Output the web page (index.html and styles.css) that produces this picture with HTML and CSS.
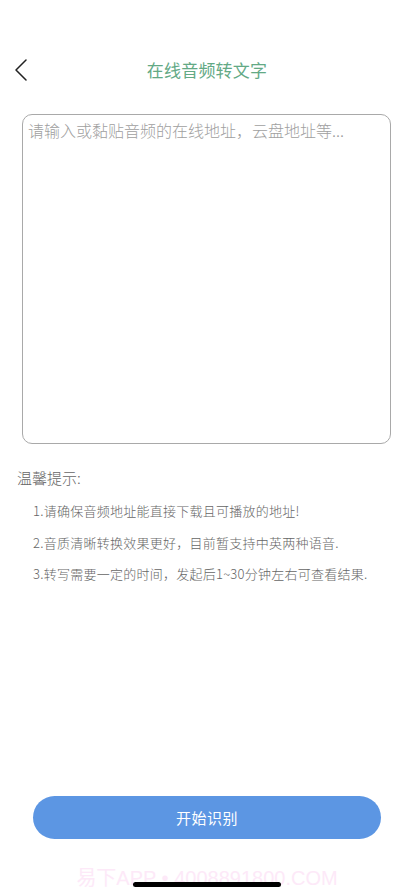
FILE: index.html
```html
<!DOCTYPE html>
<html lang="zh">
<head>
<meta charset="utf-8">
<meta name="viewport" content="width=device-width, initial-scale=1">
<title>在线音频转文字</title>
<link rel="stylesheet" href="styles.css">
</head>
<body>
<div class="page">
  <header class="navbar">
    <button class="back" aria-label="返回">
      <svg width="14" height="22" viewBox="0 0 14 22"><path d="M12 1 L2 11 L12 21" fill="none" stroke="#222" stroke-width="1.5" stroke-linecap="round" stroke-linejoin="round"/></svg>
    </button>
    <h1 class="title">在线音频转文字</h1>
  </header>
  <div class="input-wrap">
    <textarea class="url-input" placeholder="请输入或黏贴音频的在线地址，云盘地址等..."></textarea>
  </div>
  <section class="tips">
    <div class="tips-title">温馨提示:</div>
    <ol class="tips-list">
      <li>1.请确保音频地址能直接下载且可播放的地址!</li>
      <li>2.音质清晰转换效果更好，目前暂支持中英两种语音.</li>
      <li>3.转写需要一定的时间，发起后1~30分钟左右可查看结果.</li>
    </ol>
  </section>
  <div class="spacer"></div>
  <div class="footer">
    <button class="start">开始识别</button>
    <div class="watermark">易下APP • 4008891800.COM</div>
    <div class="home-bar"></div>
  </div>
</div>
</body>
</html>
```
FILE: styles.css
```css
* { box-sizing: border-box; }
html, body { margin: 0; padding: 0; background: #fff; }
body {
  font-family: "Noto Sans CJK SC", "Noto Sans", sans-serif;
  color: #333;
}
.page {
  width: 414px;
  height: 896px;
  display: flex;
  flex-direction: column;
  overflow: hidden;
}
.navbar {
  position: relative;
  height: 44px;
  margin-top: 48px;
  display: flex;
  align-items: center;
  justify-content: center;
}
.back {
  position: absolute;
  left: 14px;
  top: 11px;
  border: 0;
  background: none;
  padding: 0;
  width: 20px;
  height: 22px;
  display: flex;
  align-items: center;
}
.title {
  margin: 0;
  font-size: 17px;
  font-weight: 400;
  color: #63a985;
  line-height: 44px;
  letter-spacing: 0.2px;
}
.input-wrap {
  padding: 22px 23px 0 22px;
}
.url-input {
  display: block;
  width: 369px;
  height: 330px;
  border: 1.5px solid #a9a9a9;
  border-radius: 10px;
  padding: 4px 5px;
  font-family: inherit;
  font-size: 16px;
  font-weight: 300;
  line-height: 22px;
  resize: none;
  outline: none;
  color: #333;
}
.url-input::placeholder { color: #a0a0a0; }
.tips {
  padding: 20px 0 0 17px;
}
.tips-title {
  font-size: 15px;
  font-weight: 300;
  color: #666;
  line-height: 28px;
}
.tips-list {
  list-style: none;
  margin: 3px 0 0;
  padding: 0 0 0 16px;
}
.tips-list li {
  font-size: 13px;
  font-weight: 300;
  color: #666;
  line-height: 31.5px;
  letter-spacing: 0.25px;
}
.spacer { flex: 1; }
.footer {
  display: flex;
  flex-direction: column;
  align-items: center;
  padding-bottom: 9px;
}
.start {
  width: 348px;
  height: 43px;
  border: 0;
  border-radius: 22px;
  background: #5c96e3;
  color: #fff;
  font-family: inherit;
  font-size: 15px;
  letter-spacing: 0.5px;
}
.watermark {
  margin-top: 27px;
  font-family: "Liberation Sans", "Noto Sans CJK SC", sans-serif;
  font-size: 20px;
  line-height: 24px;
  color: #fde9f8;
}
.home-bar {
  margin-top: -8px;
  width: 148px;
  height: 5px;
  border-radius: 3px;
  background: #000;
}
```
